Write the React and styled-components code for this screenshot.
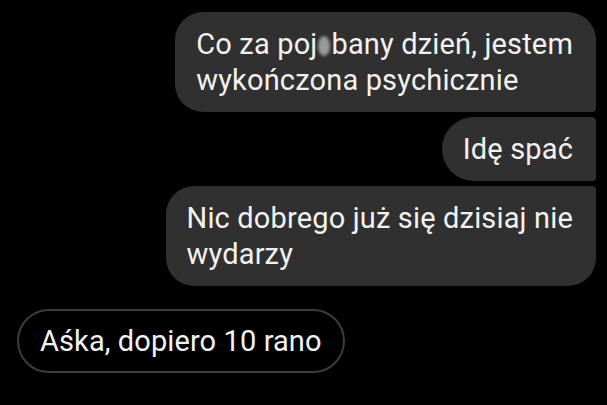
import React from 'react';
import styled, { createGlobalStyle } from 'styled-components';

const GlobalStyle = createGlobalStyle`
    html, body {
        margin: 0;
        padding: 0;
        background: #000;
    }
    body {
        font-family: Roboto, "Noto Sans", "Liberation Sans", sans-serif;
        -webkit-font-smoothing: antialiased;
    }
`;

const Thread = styled.div`
    width: 607px;
    height: 405px;
    box-sizing: border-box;
    padding: 12px 11px 0 17px;
    display: flex;
    flex-direction: column;
    background: #000;
    overflow: hidden;
`;

const Group = styled.div`
    display: flex;
    flex-direction: column;
    align-items: ${p => (p.$mine ? 'flex-end' : 'flex-start')};
    gap: 5px;
    margin-top: ${p => p.$spaced ? '23px' : '0'};
`;

const radii = {
    first: '28px 28px 4px 28px',
    middle: '33px 4px 4px 33px',
    last: '28px 4px 28px 28px',
};

const Bubble = styled.div`
    box-sizing: border-box;
    padding: 14px 23px 14px 21px;
    background: #303030;
    color: #f2f2f2;
    font-size: 29px;
    line-height: 36px;
    letter-spacing: 0.16px;
    white-space: nowrap;
    border-radius: ${p => radii[p.$pos]};
`;

const Outline = styled.div`
    box-sizing: border-box;
    padding: 12px 21px;
    border: 2px solid #3c3c3c;
    border-radius: 32px;
    color: #f2f2f2;
    font-size: 29px;
    line-height: 36px;
    letter-spacing: 0.1px;
    white-space: nowrap;
`;

const Line = styled.div`
    display: block;
`;

const Censor = styled.span`
    display: inline-block;
    width: 12px;
    height: 20px;
    margin: 0 1px 0 1px;
    vertical-align: -2px;
    border-radius: 50%;
    background: #9a9a9a;
    filter: blur(1.5px);
`;

const App = () => {
    return (
        <>
            <GlobalStyle />
            <Thread>
                <Group $mine>
                    <Bubble $pos="first">
                        <Line>Co za poj<Censor />bany dzień, jestem</Line>
                        <Line>wykończona psychicznie</Line>
                    </Bubble>
                    <Bubble $pos="middle">
                        <Line>Idę spać</Line>
                    </Bubble>
                    <Bubble $pos="last">
                        <Line>Nic dobrego już się dzisiaj nie</Line>
                        <Line>wydarzy</Line>
                    </Bubble>
                </Group>
                <Group $spaced>
                    <Outline>Aśka, dopiero 10 rano</Outline>
                </Group>
            </Thread>
        </>
    );
};

export default App;
